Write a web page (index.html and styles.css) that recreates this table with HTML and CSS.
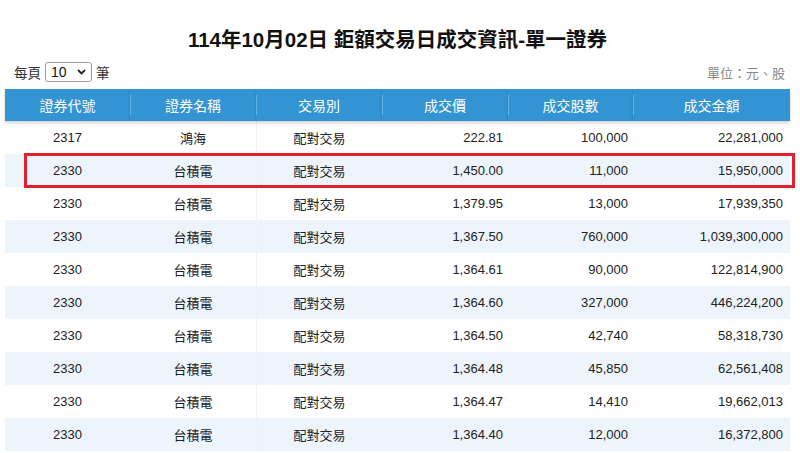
FILE: index.html
```html
<!DOCTYPE html>
<html lang="zh-Hant">
<head>
<meta charset="utf-8">
<title>鉅額交易日成交資訊</title>
<link rel="stylesheet" href="styles.css">
</head>
<body>
<div class="page">
  <h1 class="title">114年10月02日 鉅額交易日成交資訊-單一證券</h1>
  <div class="controls">
    <div class="per-page">
      <span>每頁</span>
      <span class="select"><span class="select-val">10</span><svg class="chev" width="9" height="6" viewBox="0 0 9 6"><path d="M1 1 L4.5 4.5 L8 1" fill="none" stroke="#222" stroke-width="1.8"/></svg></span>
      <span>筆</span>
    </div>
    <div class="unit">單位：元、股</div>
  </div>
  <div class="grid">
    <div class="th">證券代號</div>
    <div class="th div">證券名稱</div>
    <div class="th div">交易別</div>
    <div class="th div">成交價</div>
    <div class="th div">成交股數</div>
    <div class="th div">成交金額</div>

    <div class="row">
      <div class="c">2317</div><div class="c">鴻海</div><div class="c line">配對交易</div><div class="r">222.81</div><div class="r">100,000</div><div class="r last">22,281,000</div>
    </div>
    <div class="row alt">
      <div class="c">2330</div><div class="c">台積電</div><div class="c line">配對交易</div><div class="r">1,450.00</div><div class="r">11,000</div><div class="r last">15,950,000</div>
      <div class="mark"></div>
    </div>
    <div class="row">
      <div class="c">2330</div><div class="c">台積電</div><div class="c line">配對交易</div><div class="r">1,379.95</div><div class="r">13,000</div><div class="r last">17,939,350</div>
    </div>
    <div class="row alt">
      <div class="c">2330</div><div class="c">台積電</div><div class="c line">配對交易</div><div class="r">1,367.50</div><div class="r">760,000</div><div class="r last">1,039,300,000</div>
    </div>
    <div class="row">
      <div class="c">2330</div><div class="c">台積電</div><div class="c line">配對交易</div><div class="r">1,364.61</div><div class="r">90,000</div><div class="r last">122,814,900</div>
    </div>
    <div class="row alt">
      <div class="c">2330</div><div class="c">台積電</div><div class="c line">配對交易</div><div class="r">1,364.60</div><div class="r">327,000</div><div class="r last">446,224,200</div>
    </div>
    <div class="row">
      <div class="c">2330</div><div class="c">台積電</div><div class="c line">配對交易</div><div class="r">1,364.50</div><div class="r">42,740</div><div class="r last">58,318,730</div>
    </div>
    <div class="row alt">
      <div class="c">2330</div><div class="c">台積電</div><div class="c line">配對交易</div><div class="r">1,364.48</div><div class="r">45,850</div><div class="r last">62,561,408</div>
    </div>
    <div class="row">
      <div class="c">2330</div><div class="c">台積電</div><div class="c line">配對交易</div><div class="r">1,364.47</div><div class="r">14,410</div><div class="r last">19,662,013</div>
    </div>
    <div class="row alt">
      <div class="c">2330</div><div class="c">台積電</div><div class="c line">配對交易</div><div class="r">1,364.40</div><div class="r">12,000</div><div class="r last">16,372,800</div>
    </div>
  </div>
</div>
</body>
</html>
```

FILE: styles.css
```css
* { box-sizing: border-box; }
html, body { margin: 0; padding: 0; background: #fff; }
body {
  font-family: "Liberation Sans", Arial, "Noto Sans CJK TC", sans-serif;
  color: #333;
  width: 800px;
  height: 453px;
  overflow: hidden;
}
.page { padding: 0 10px 0 5px; }
.title {
  margin: 0;
  padding-top: 28px;
  font-size: 20.5px;
  line-height: 24px;
  font-weight: bold;
  text-align: center;
  color: #111;
}
.controls {
  margin-top: 8px;
  height: 24px;
  margin-bottom: 5px;
  display: flex;
  align-items: center;
  justify-content: space-between;
  font-size: 13.5px;
}
.per-page {
  display: flex;
  align-items: center;
  gap: 4px;
  padding-left: 9px;
  color: #333;
}
.select {
  display: inline-flex;
  align-items: center;
  justify-content: space-between;
  width: 47px;
  height: 20px;
  border: 1px solid #999;
  border-radius: 3px;
  padding: 0 5px 0 5px;
  font-size: 14px;
  color: #111;
}
.unit {
  color: #888;
  font-size: 13px;
  padding-right: 5px;
}
.grid {
  position: relative;
  display: grid;
  grid-template-columns: 125px 126px 126px 126px 125px 157px;
  width: 785px;
}
.th {
  position: relative;
  height: 32px;
  background: #3394d4;
  color: #fff;
  font-size: 14px;
  display: flex;
  align-items: center;
  justify-content: center;
  box-shadow: 0 2px 3px rgba(0,0,0,0.18);
}
.th.div::before {
  content: "";
  position: absolute;
  left: 0;
  top: 6px;
  bottom: 6px;
  width: 1px;
  background: #66b1e3;
}
.row {
  display: contents;
}
.row > div {
  height: 33px;
  display: flex;
  align-items: center;
  font-size: 13px;
  color: #222;
}
.row.alt > div { background: #edf4fc; }
.c { justify-content: center; }
.r { justify-content: flex-end; padding-right: 5px; }
.r.last { padding-right: 7px; }
.c.line { border-left: 1px solid #eef1f5; }
.row > .mark {
  position: absolute;
  left: 19px;
  top: 64px;
  width: 771px;
  height: 35px;
  border: 3px solid #e3202c;
  background: transparent !important;
}
```
